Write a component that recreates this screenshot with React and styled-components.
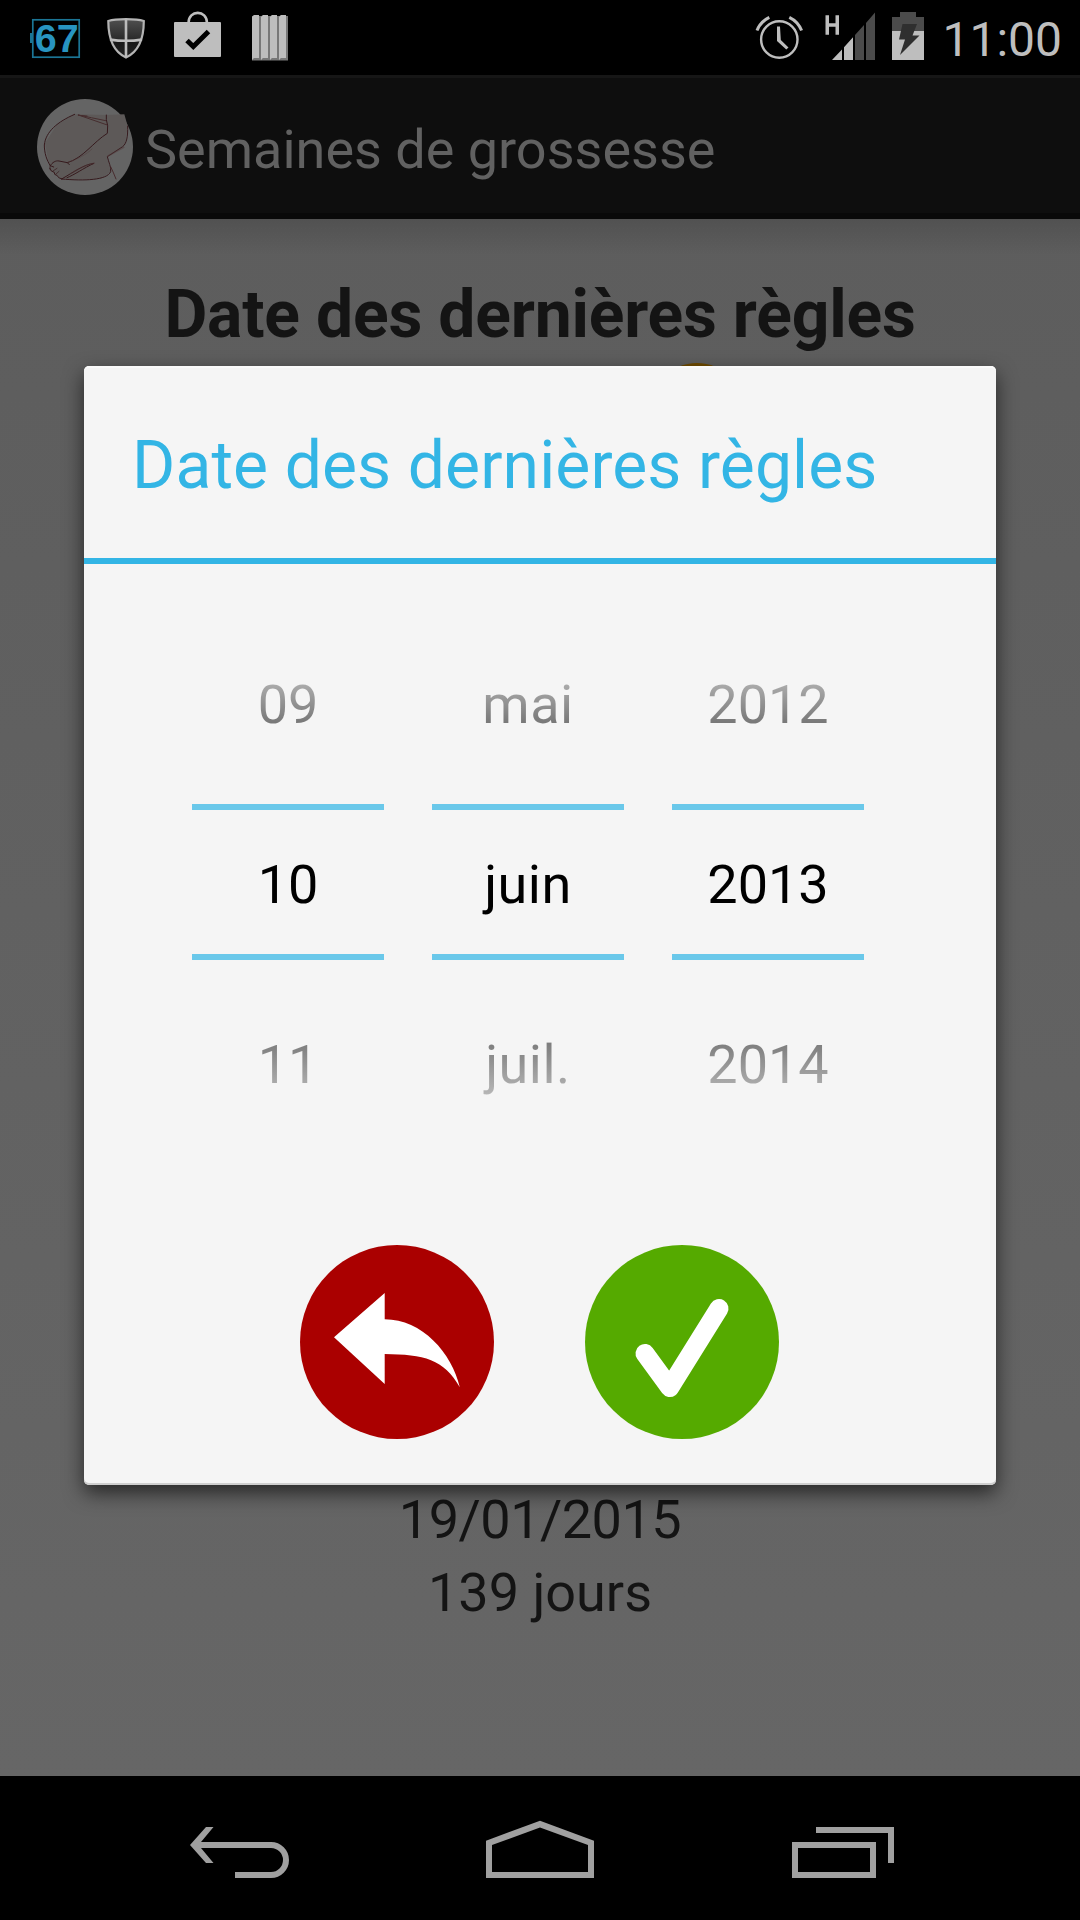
import React, { useState } from "react";
import styled, { createGlobalStyle } from "styled-components";

const pickers = [
  { id: "day", values: ["09", "10", "11"] },
  { id: "month", values: ["mai", "juin", "juil."], spacing: "0.5px" },
  { id: "year", values: ["2012", "2013", "2014"] },
];

const BatteryLevelIcon = () => (
  <svg width="52" height="75" viewBox="30 0 52 75">
    <rect x="32.8" y="19.8" width="46.4" height="37.4" fill="none" stroke="#1b7595" strokeWidth="1.7" />
    <rect x="30" y="33" width="3" height="10" fill="#1b7595" />
    <text x="34.8" y="52.2" fill="#2894c0" fontFamily="Liberation Sans, Arial, sans-serif" fontWeight="700" fontSize="39.5">67</text>
  </svg>
);

const ShieldIcon = () => (
  <svg width="43" height="75" viewBox="106 0 43 75">
    <defs>
      <linearGradient id="shield" x1="0" y1="0" x2="0" y2="1">
        <stop offset="0" stopColor="#505050" />
        <stop offset="0.5" stopColor="#2c2c2c" />
        <stop offset="0.55" stopColor="#171717" />
        <stop offset="1" stopColor="#222" />
      </linearGradient>
    </defs>
    <path d="M108.3 21C116 18.6 136 18.6 143.8 21C143.8 38 139 51.5 126 57.5C113 51.5 108.3 38 108.3 21Z" fill="url(#shield)" stroke="#b4b4b4" strokeWidth="2.2" />
    <path d="M126 19.5V57M110 39.6Q126 42 142 39.6" fill="none" stroke="#bcbcbc" strokeWidth="2.6" />
  </svg>
);

const StoreIcon = () => (
  <svg width="54" height="75" viewBox="173 0 54 75">
    <path d="M188.5 23C188.5 9.5 207 9.5 207 23" fill="none" stroke="#bebebe" strokeWidth="2.6" />
    <rect x="174" y="22" width="47" height="35" rx="1" fill="#bebebe" />
    <path d="M187 40.5L193.3 46.5L208.5 31.5" fill="none" stroke="#000" strokeWidth="5" />
  </svg>
);

const BarsIcon = () => (
  <svg width="38" height="75" viewBox="251 0 38 75">
    {[252, 261, 270, 279].map((x) => (
      <g key={x}>
        <path d={`M${x} 16.5L${x + 2} 15H${x + 7}V58.5H${x + 2}L${x} 60.5Z`} fill="#bdbdbd" />
        <path d={`M${x + 7} 16H${x + 9}V60.5H${x}L${x + 2} 58H${x + 7}Z`} fill="#777" />
      </g>
    ))}
  </svg>
);

const AlarmIcon = () => (
  <svg width="52" height="75" viewBox="754 0 52 75">
    <g fill="none" stroke="#bebebe">
      <circle cx="779.3" cy="39.5" r="18.2" strokeWidth="2.4" />
      <path d="M757 30.5Q760.5 21.5 769.3 17.3" strokeWidth="3" />
      <path d="M801.6 30.5Q798 21.5 789.3 17.3" strokeWidth="3" />
    </g>
    <path d="M777 26.5H780L780.8 40L788.5 47.5L786.3 49.5L777 41Z" fill="#bebebe" />
  </svg>
);

const SignalIcon = () => (
  <svg width="54" height="75" viewBox="822 0 54 75">
    <path d="M825.5 15.2H829V23.3H835.5V15.2H839V34.8H835.5V26.8H829V34.8H825.5Z" fill="#bebebe" />
    <path d="M832 60L842 49.5V60ZM844 60V47.2L853 37.3V60Z" fill="#bebebe" />
    <path d="M855 60V35L864 25V60ZM866 60V23L875 12.5V60Z" fill="#4b4b4b" />
  </svg>
);

const ChargingIcon = () => (
  <svg width="32" height="75" viewBox="892 0 32 75">
    <path d="M892 31V17H900V12H916V17H924V31Z" fill="#4b4b4b" />
    <rect x="892" y="31" width="32" height="29" fill="#bebebe" />
    <path d="M902.5 24H917L912.5 35.5H919.5L900 55L905 39.5H899Z" fill="#2f2f2f" />
  </svg>
);

const AppLogo = () => (
  <svg width="96" height="96" viewBox="0 0 288 288">
    <circle cx="144" cy="144" r="144" fill="#646464" />
    <path d="M112 46L209 48L262 46L272 81L264 138L209 173L221 218L189 240H74L39 213L24 133L59 78Z" fill="#5d5958" />
    <g fill="none" stroke="#361a1d" strokeWidth="3" strokeLinecap="round">
      <path d="M113 46C62 68 26 98 22 138C22 162 29 184 40 200" />
      <path d="M124 48L211 78M124 48Q162 56 206 65M124 49L150 51" stroke="#462d2e" />
      <path d="M208 48V62L212 80L211 103C170 128 138 178 91 191" />
      <path d="M40 200C46 190 56 184 66 186L91 191L97 197" />
      <path d="M40 200L50 204M39 208L43 216L52 220L53 226L61 230L65 236L75 240" />
      <path d="M40 200L38 210M48 216L60 208M56 226L66 217" strokeWidth="2" />
      <path d="M74 240C112 218 142 196 171 193C140 207 112 228 90 236" strokeWidth="3" />
      <path d="M272 81C273 112 269 134 257 143L211 173C215 190 223 205 221 218C210 244 142 246 74 240" />
      <path d="M221 203Q230 222 237 240" stroke="#482c2e" />
    </g>
    <g fill="none" stroke="#503738" strokeWidth="5" opacity="0.45">
      <path d="M262 144L211 172M102 224Q140 198 174 192" />
      <path d="M91 190C120 182 150 165 166 149" strokeWidth="3" />
    </g>
  </svg>
);

const CancelIcon = () => (
  <svg width="194" height="194" viewBox="0 0 194 194">
    <path d="M34 92.3L84.7 48V74.3C122 74.3 152 108 159.8 142.3C144 114 124 109.5 84.7 109V139Z" fill="#fff" />
  </svg>
);

const ConfirmIcon = () => (
  <svg width="194" height="194" viewBox="0 0 194 194">
    <path d="M60 108.5L84.8 142.5L134 63.5" fill="none" stroke="#fff" strokeWidth="19" strokeLinecap="round" strokeLinejoin="round" />
  </svg>
);

const BackIcon = () => (
  <svg width="108" height="60" viewBox="186 1819 108 60">
    <path d="M195 1845H271a15 15 0 0 1 0 30H235" fill="none" stroke="#a0a0a0" strokeWidth="6" />
    <path d="M190 1845L206 1827H213.5L201 1842V1848L213.5 1863H206Z" fill="#a0a0a0" />
  </svg>
);

const HomeIcon = () => (
  <svg width="108" height="60" viewBox="486 1819 108 60">
    <path d="M486 1878V1840.7L540 1820.7L594 1840.7V1878ZM492 1872H588V1845L540 1827.6L492 1845Z" fill="#a0a0a0" fillRule="evenodd" />
  </svg>
);

const RecentIcon = () => (
  <svg width="108" height="60" viewBox="786 1819 108 60">
    <path d="M792 1842H876V1878H792ZM798 1848V1872H870V1848Z" fill="#a0a0a0" fillRule="evenodd" />
    <path d="M816 1827H894V1863H888V1833H816Z" fill="#a0a0a0" />
  </svg>
);

const App = () => {
  const [open, setOpen] = useState(true);

  return (
    <Screen>
      <GlobalStyle />
      <StatusBar>
        <Notifications>
          <BatteryLevelIcon />
          <ShieldIcon />
          <StoreIcon />
          <BarsIcon />
        </Notifications>
        <SystemIcons>
          <AlarmIcon />
          <SignalIcon />
          <ChargingIcon />
          <Clock>11:00</Clock>
        </SystemIcons>
      </StatusBar>

      <ActionBar>
        <AppLogo />
        <AppTitle>Semaines de grossesse</AppTitle>
      </ActionBar>

      <Content>
        <Heading>Date des dernières règles</Heading>
        <EditButton type="button" aria-label="Modifier" onClick={() => setOpen(true)} />
        <Summary>
          <DueDate>19/01/2015</DueDate>
          <span>139 jours</span>
        </Summary>
      </Content>

      <NavBar>
        <BackIcon />
        <HomeIcon />
        <RecentIcon />
      </NavBar>

      {open && (
        <Dialog>
          <DialogTitle>Date des dernières règles</DialogTitle>
          <Pickers>
            {pickers.map(({ id, values, spacing }) => (
              <Picker key={id} $spacing={spacing}>
                <Previous>{values[0]}</Previous>
                <Selected>{values[1]}</Selected>
                <Next>{values[2]}</Next>
              </Picker>
            ))}
          </Pickers>
          <Actions>
            <RoundButton type="button" $color="#a00" aria-label="Annuler" onClick={() => setOpen(false)}>
              <CancelIcon />
            </RoundButton>
            <RoundButton type="button" $color="#5a0" aria-label="Valider" onClick={() => setOpen(false)}>
              <ConfirmIcon />
            </RoundButton>
          </Actions>
        </Dialog>
      )}
    </Screen>
  );
};

export default App;

const GlobalStyle = createGlobalStyle`
  body {
    margin: 0;
    background: #000;
  }
  * {
    box-sizing: border-box;
  }
  svg {
    display: block;
    flex-shrink: 0;
  }
`;

const Screen = styled.div`
  position: relative;
  width: 1080px;
  height: 1920px;
  display: flex;
  flex-direction: column;
  overflow: hidden;
  font-family: Roboto, "Noto Sans", sans-serif;
`;

const StatusBar = styled.div`
  height: 75px;
  display: flex;
  justify-content: space-between;
  background: #000;
  padding: 0 18px 0 30px;
`;

const Notifications = styled.div`
  display: flex;
  gap: 24px;
`;

const SystemIcons = styled.div`
  display: flex;
  gap: 16px;
`;

const Clock = styled.div`
  width: 122px;
  line-height: 79px;
  font-size: 48px;
  text-align: right;
  white-space: nowrap;
  color: #bebebe;
`;

const ActionBar = styled.div`
  height: 144px;
  display: flex;
  align-items: center;
  gap: 12px;
  padding: 3px 0 0 37px;
  background: #0e0e0e;
  border-top: 3px solid #161616;
  border-bottom: 6px solid #090909;
`;

const AppTitle = styled.div`
  font-size: 54px;
  line-height: 60px;
  padding-top: 5px;
  white-space: nowrap;
  color: #616161;
`;

const Content = styled.div`
  flex: 1;
  display: flex;
  flex-direction: column;
  align-items: center;
  background:
    linear-gradient(rgba(0, 0, 0, 0.13), rgba(0, 0, 0, 0) 36px),
    linear-gradient(#5d5d5d, #666);
`;

const Heading = styled.h1`
  margin: 56px 0 0;
  font-size: 66px;
  line-height: 80px;
  font-weight: 700;
  letter-spacing: -0.2px;
  white-space: nowrap;
  color: #141414;
`;

const EditButton = styled.button`
  width: 96px;
  height: 96px;
  margin: 8px 0 0 313px;
  padding: 0;
  border: none;
  border-radius: 50%;
  background: #6e4a00;
`;

const Summary = styled.div`
  margin-top: 1024px;
  display: flex;
  flex-direction: column;
  align-items: center;
  font-size: 54px;
  line-height: 73px;
  color: #141414;
`;

const DueDate = styled.span`
  letter-spacing: -0.5px;
`;

const NavBar = styled.div`
  height: 144px;
  display: flex;
  align-items: flex-start;
  justify-content: space-between;
  padding: 43px 186px 0;
  background: #000;
`;

const Dialog = styled.div`
  position: absolute;
  top: 366px;
  left: 84px;
  width: 912px;
  height: 1119px;
  border-radius: 5px;
  background: #f5f5f5;
  box-shadow: 0 8px 20px rgba(0, 0, 0, 0.62), inset 0 2px 0 #fafafa, inset 0 -2px 0 #cfcfcf;
`;

const DialogTitle = styled.h2`
  height: 198px;
  margin: 0;
  padding: 7px 48px 0;
  border-bottom: 6px solid #33b5e5;
  font-size: 66px;
  font-weight: 400;
  line-height: 185px;
  letter-spacing: 0.1px;
  white-space: nowrap;
  color: #33b5e5;
`;

const Pickers = styled.div`
  display: flex;
  gap: 48px;
  padding: 41px 0 0 108px;
`;

const Picker = styled.div`
  width: 192px;
  font-size: 54px;
  text-align: center;
  letter-spacing: ${({ $spacing }) => $spacing || "normal"};
`;

const Faded = styled.div`
  color: transparent;
  background-clip: text;
  -webkit-background-clip: text;
`;

const Previous = styled(Faded)`
  line-height: 199px;
  background-image: linear-gradient(#f5f5f5 7px, #ababab 79px, #787878 118px);
`;

const Selected = styled.div`
  height: 156px;
  padding-top: 5px;
  border-top: 6px solid #6ac8ea;
  border-bottom: 6px solid #6ac8ea;
  line-height: 139px;
  color: #000;
`;

const Next = styled(Faded)`
  line-height: 209px;
  background-image: linear-gradient(#7c7c7c 82px, #a9a9a9 123px, #f5f5f5 192px);
`;

const Actions = styled.div`
  display: flex;
  gap: 91px;
  padding: 76px 0 0 216px;
`;

const RoundButton = styled.button`
  width: 194px;
  height: 194px;
  padding: 0;
  border: none;
  border-radius: 50%;
  background: ${({ $color }) => $color};
`;
